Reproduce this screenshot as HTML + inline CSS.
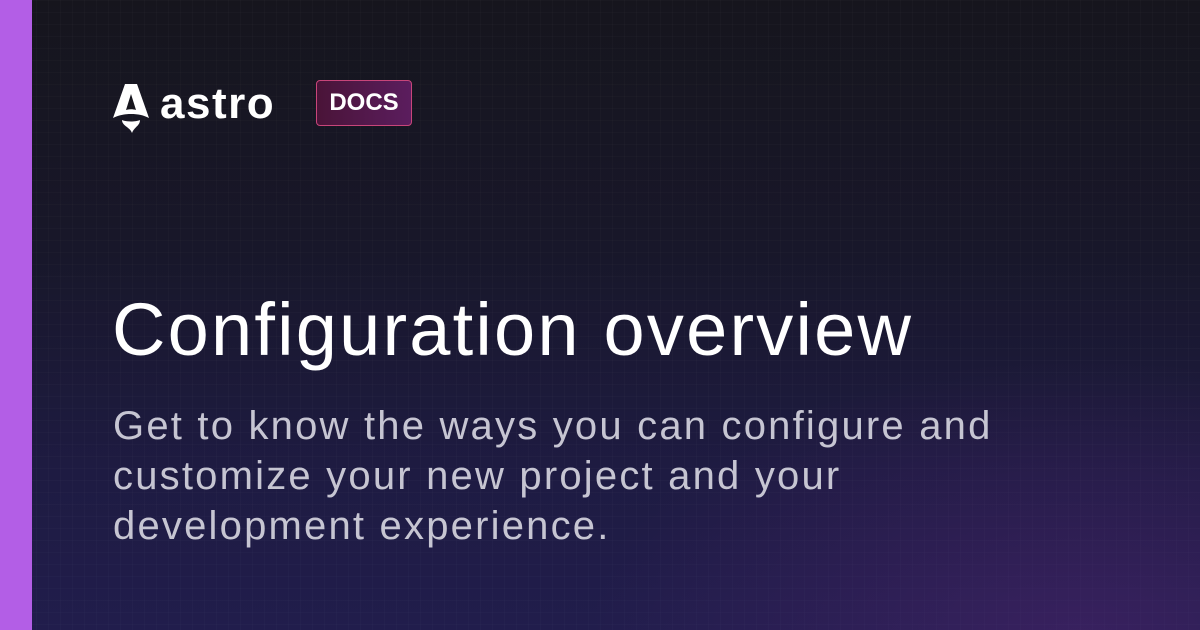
<!DOCTYPE html>
<html><head><meta charset="utf-8"><style>
html,body{margin:0;padding:0}
body{width:1200px;height:630px;overflow:hidden;position:relative;font-family:"Liberation Sans",sans-serif;
background:linear-gradient(180deg,#16151d 0%,#18172a 40%,#1e1b42 75%,#211d4c 100%);}
.glow{position:absolute;inset:0;background:radial-gradient(ellipse 700px 400px at 1080px 640px,rgba(100,40,130,.35),transparent 70%);}
.grid{position:absolute;inset:0;background-image:linear-gradient(rgba(255,255,255,.015) 1px,transparent 1px),linear-gradient(90deg,rgba(255,255,255,.015) 1px,transparent 1px);background-size:12px 12px;}
.stripe{position:absolute;left:0;top:0;width:32px;height:630px;background:#b35ee6}
.logo{position:absolute;left:112px;top:82px;display:flex;align-items:center}
.word{color:#fff;font-weight:700;font-size:44px;margin-left:10px;letter-spacing:1.5px;line-height:1;margin-top:-8px}
.docs{position:absolute;left:316px;top:80px;width:96px;height:46px;box-sizing:border-box;border:1.5px solid #c8457a;border-radius:4px;background:linear-gradient(90deg,#4a1438,#5b1d5e);color:#fff;font-weight:700;font-size:24px;text-align:center;line-height:43px}
h1{position:absolute;left:112px;top:290px;margin:0;color:#fff;font-weight:400;font-size:74px;line-height:80px;white-space:nowrap;letter-spacing:2.2px}
p{position:absolute;left:113px;top:401px;margin:0;color:#c6c5d2;font-size:40px;line-height:50px;white-space:nowrap;letter-spacing:2.2px}
</style></head><body>
<div class="grid"></div><div class="glow"></div>
<div class="stripe"></div>
<div class="logo">
<svg width="38" height="52" viewBox="0 0 38 52"><path d="M13 2 H25 L37 36 C31 33 26 32 19 32 C12 32 7 33 1 36 Z" fill="#fff"/><path d="M19 12 L14 28 C17 27 21 27 24 28 Z" fill="#16151d"/><path d="M10 38 C14 40 24 40 28 38 C28 44 22 45 20 51 C18 45 10 44 10 38 Z" fill="#fff"/></svg>
<span class="word">astro</span>
</div>
<div class="docs">DOCS</div>
<h1>Configuration overview</h1>
<p>Get to know the ways you can configure and<br>customize your new project and your<br>development experience.</p>
</body></html>
